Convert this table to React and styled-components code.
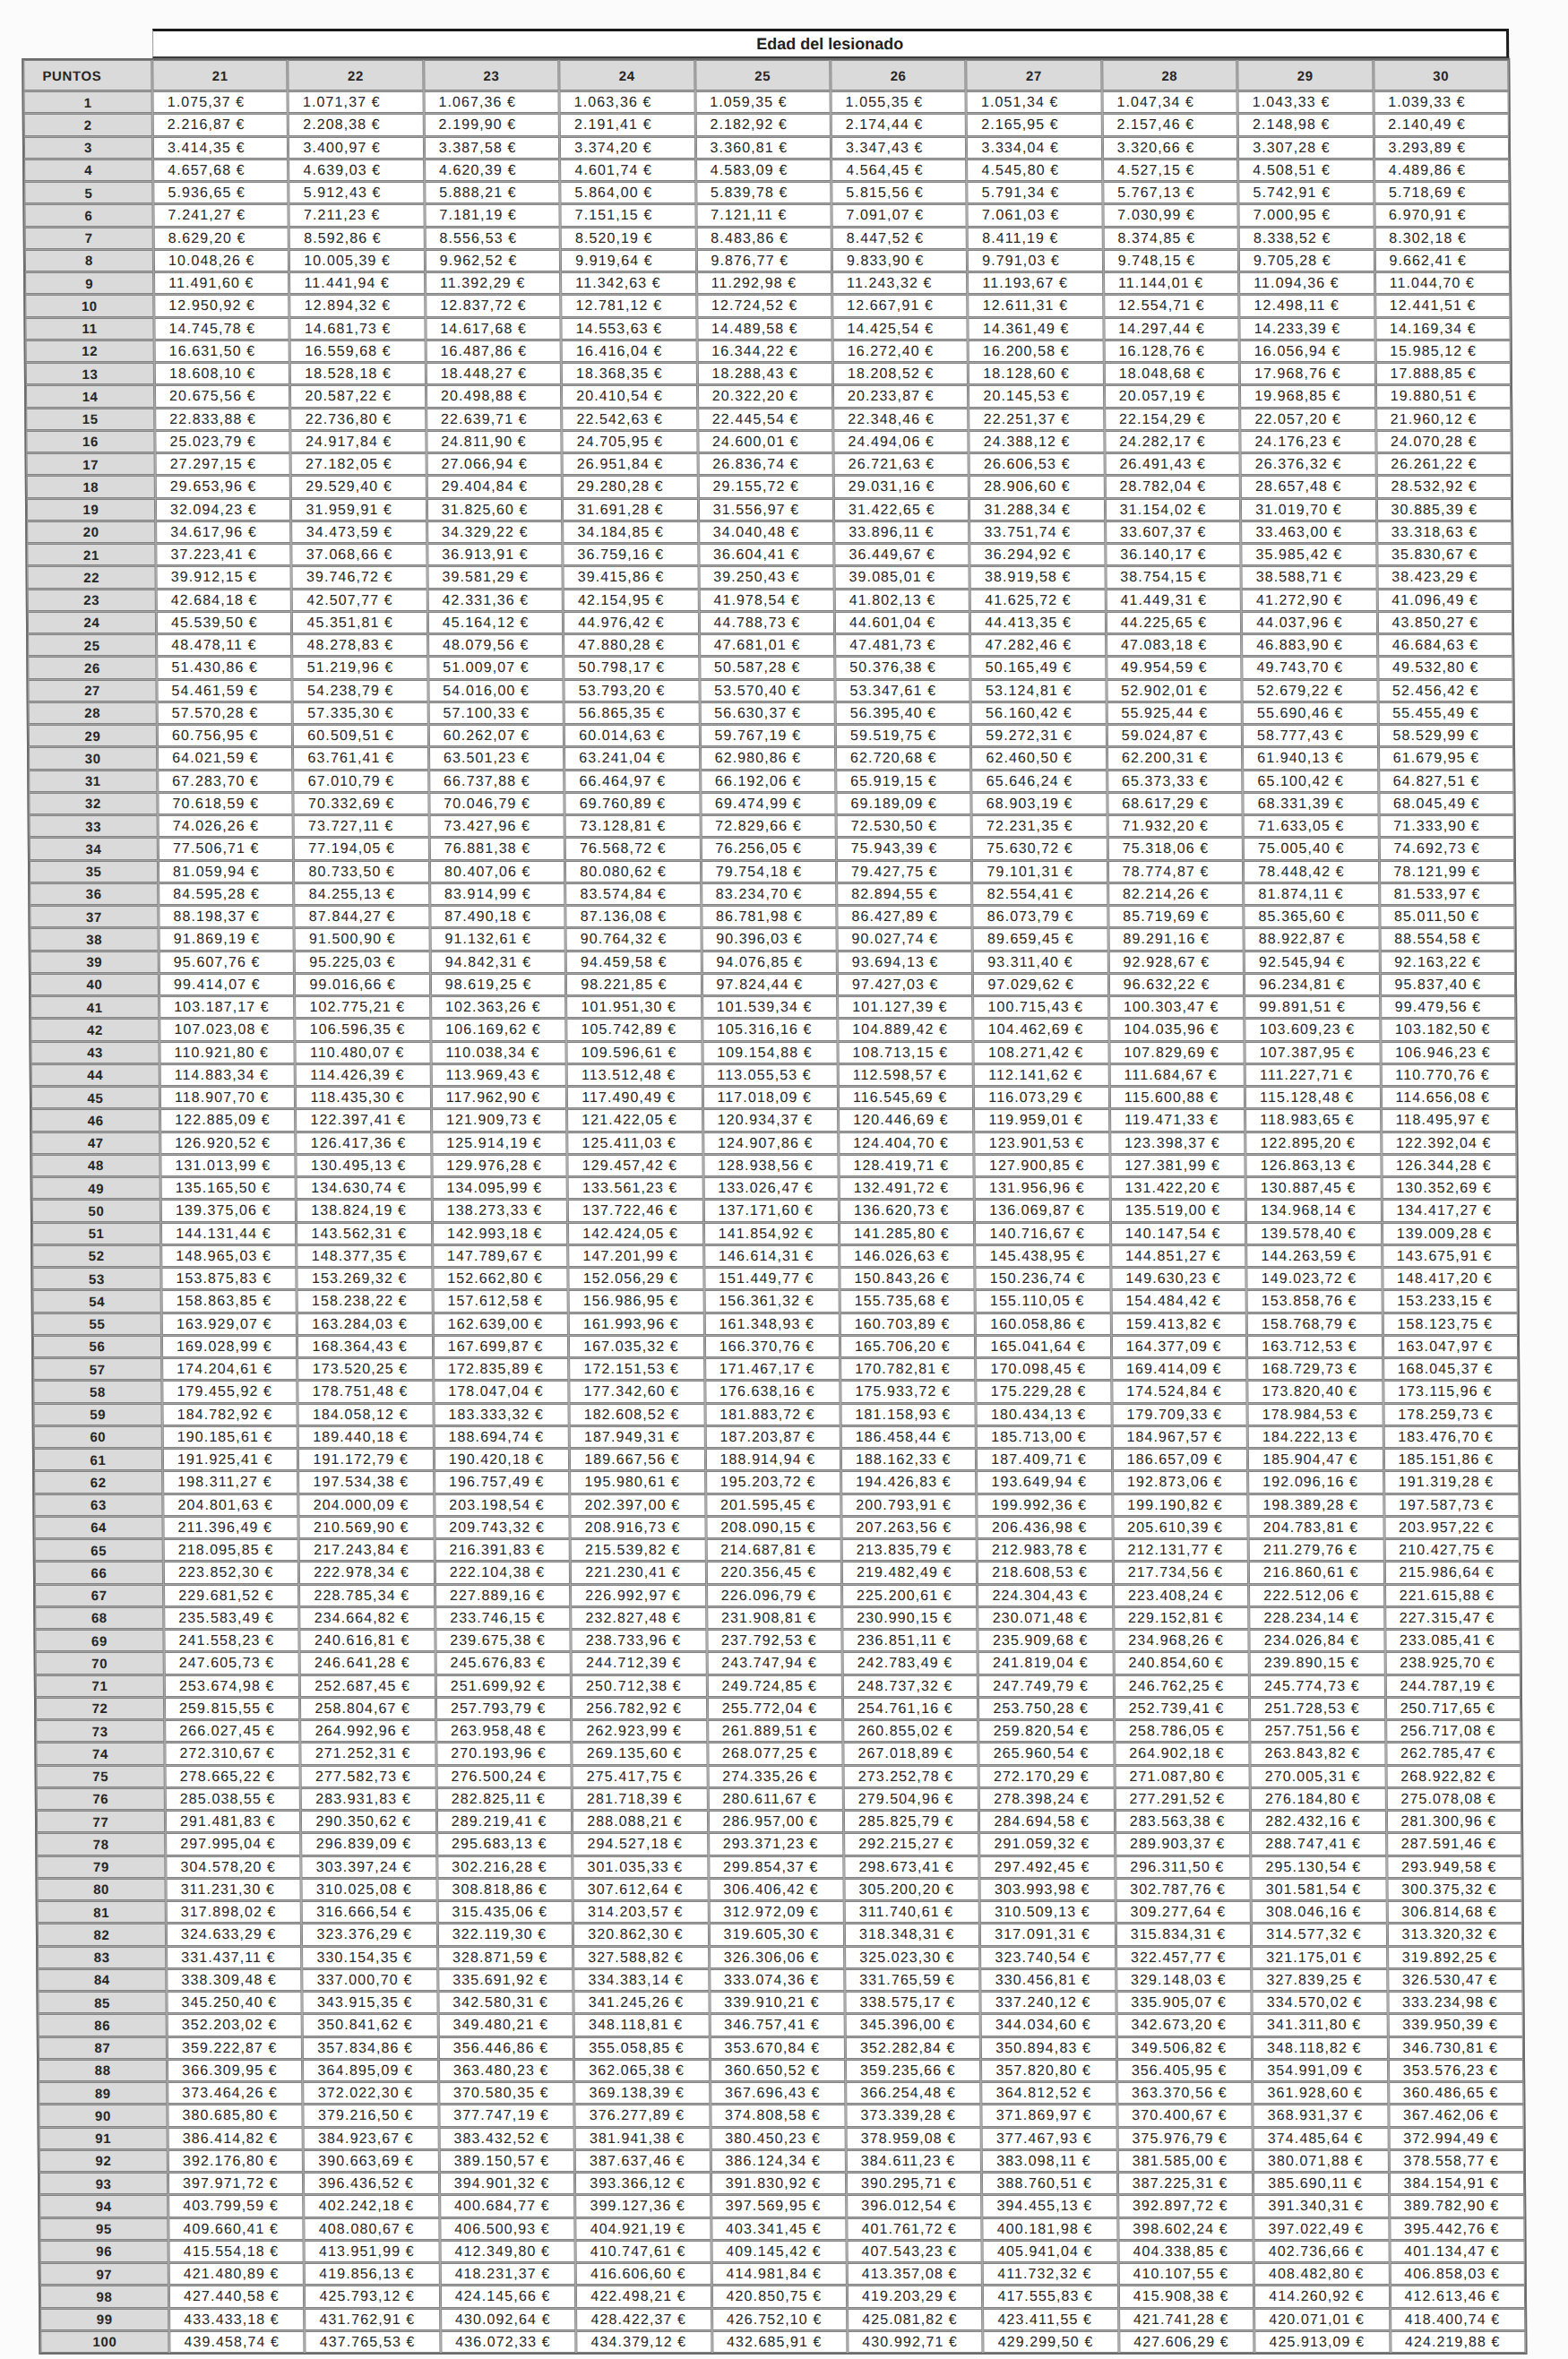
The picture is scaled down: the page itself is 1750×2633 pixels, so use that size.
import styled, { createGlobalStyle } from "styled-components";

const GlobalStyle = createGlobalStyle`
  body {
    margin: 0;
    background: #fbfbfb;
    font-family: "Liberation Sans", Arial, sans-serif;
  }
`;

const AGES = [21, 22, 23, 24, 25, 26, 27, 28, 29, 30];

// [edad 21, edad 29, edad 30] — the ages in between are linear
const ROWS = [
  [1075.37, 1043.33, 1039.33],
  [2216.87, 2148.98, 2140.49],
  [3414.35, 3307.28, 3293.89],
  [4657.68, 4508.51, 4489.86],
  [5936.65, 5742.91, 5718.69],
  [7241.27, 7000.95, 6970.91],
  [8629.2, 8338.52, 8302.18],
  [10048.26, 9705.28, 9662.41],
  [11491.6, 11094.36, 11044.7],
  [12950.92, 12498.11, 12441.51],
  [14745.78, 14233.39, 14169.34],
  [16631.5, 16056.94, 15985.12],
  [18608.1, 17968.76, 17888.85],
  [20675.56, 19968.85, 19880.51],
  [22833.88, 22057.2, 21960.12],
  [25023.79, 24176.23, 24070.28],
  [27297.15, 26376.32, 26261.22],
  [29653.96, 28657.48, 28532.92],
  [32094.23, 31019.7, 30885.39],
  [34617.96, 33463.0, 33318.63],
  [37223.41, 35985.42, 35830.67],
  [39912.15, 38588.71, 38423.29],
  [42684.18, 41272.9, 41096.49],
  [45539.5, 44037.96, 43850.27],
  [48478.11, 46883.9, 46684.63],
  [51430.86, 49743.7, 49532.8],
  [54461.59, 52679.22, 52456.42],
  [57570.28, 55690.46, 55455.49],
  [60756.95, 58777.43, 58529.99],
  [64021.59, 61940.13, 61679.95],
  [67283.7, 65100.42, 64827.51],
  [70618.59, 68331.39, 68045.49],
  [74026.26, 71633.05, 71333.9],
  [77506.71, 75005.4, 74692.73],
  [81059.94, 78448.42, 78121.99],
  [84595.28, 81874.11, 81533.97],
  [88198.37, 85365.6, 85011.5],
  [91869.19, 88922.87, 88554.58],
  [95607.76, 92545.94, 92163.22],
  [99414.07, 96234.81, 95837.4],
  [103187.17, 99891.51, 99479.56],
  [107023.08, 103609.23, 103182.5],
  [110921.8, 107387.95, 106946.23],
  [114883.34, 111227.71, 110770.76],
  [118907.7, 115128.48, 114656.08],
  [122885.09, 118983.65, 118495.97],
  [126920.52, 122895.2, 122392.04],
  [131013.99, 126863.13, 126344.28],
  [135165.5, 130887.45, 130352.69],
  [139375.06, 134968.14, 134417.27],
  [144131.44, 139578.4, 139009.28],
  [148965.03, 144263.59, 143675.91],
  [153875.83, 149023.72, 148417.2],
  [158863.85, 153858.76, 153233.15],
  [163929.07, 158768.79, 158123.75],
  [169028.99, 163712.53, 163047.97],
  [174204.61, 168729.73, 168045.37],
  [179455.92, 173820.4, 173115.96],
  [184782.92, 178984.53, 178259.73],
  [190185.61, 184222.13, 183476.7],
  [191925.41, 185904.47, 185151.86],
  [198311.27, 192096.16, 191319.28],
  [204801.63, 198389.28, 197587.73],
  [211396.49, 204783.81, 203957.22],
  [218095.85, 211279.76, 210427.75],
  [223852.3, 216860.61, 215986.64],
  [229681.52, 222512.06, 221615.88],
  [235583.49, 228234.14, 227315.47],
  [241558.23, 234026.84, 233085.41],
  [247605.73, 239890.15, 238925.7],
  [253674.98, 245774.73, 244787.19],
  [259815.55, 251728.53, 250717.65],
  [266027.45, 257751.56, 256717.08],
  [272310.67, 263843.82, 262785.47],
  [278665.22, 270005.31, 268922.82],
  [285038.55, 276184.8, 275078.08],
  [291481.83, 282432.16, 281300.96],
  [297995.04, 288747.41, 287591.46],
  [304578.2, 295130.54, 293949.58],
  [311231.3, 301581.54, 300375.32],
  [317898.02, 308046.16, 306814.68],
  [324633.29, 314577.32, 313320.32],
  [331437.11, 321175.01, 319892.25],
  [338309.48, 327839.25, 326530.47],
  [345250.4, 334570.02, 333234.98],
  [352203.02, 341311.8, 339950.39],
  [359222.87, 348118.82, 346730.81],
  [366309.95, 354991.09, 353576.23],
  [373464.26, 361928.6, 360486.65],
  [380685.8, 368931.37, 367462.06],
  [386414.82, 374485.64, 372994.49],
  [392176.8, 380071.88, 378558.77],
  [397971.72, 385690.11, 384154.91],
  [403799.59, 391340.31, 389782.9],
  [409660.41, 397022.49, 395442.76],
  [415554.18, 402736.66, 401134.47],
  [421480.89, 408482.8, 406858.03],
  [427440.58, 414260.92, 412613.46],
  [433433.18, 420071.01, 418400.74],
  [439458.74, 425913.09, 424219.88],
];

function euros(v) {
  const [int, dec] = v.toFixed(2).split(".");
  return int.replace(/\B(?=(\d{3})+(?!\d))/g, ".") + "," + dec + " €";
}

function rowValues([first, age29, last]) {
  return AGES.map((_, i) => {
    if (i === 8) return age29;
    if (i === 9) return last;
    return first + ((last - first) * i) / 9;
  });
}

const Page = styled.div`
  width: 1750px;
  height: 2633px;
  overflow: hidden;
  padding: 32px 0 0 24px;
  box-sizing: border-box;
`;

const Sheet = styled.div`
  width: fit-content;
  transform: skewX(0.43deg);
  transform-origin: 0 0;
`;

const TitleRow = styled.div`
  display: flex;
  padding-left: 146px;
`;

const TitleBox = styled.div`
  width: 1514px;
  height: 33px;
  box-sizing: border-box;
  border-top: 3px solid #1b1b1b;
  border-right: 3px solid #1b1b1b;
  border-bottom: 2px solid #3a3a3a;
  border-left: 1px solid #9a9a9a;
  background: #fff;
  display: flex;
  align-items: center;
  justify-content: center;
  font-size: 18px;
  font-weight: bold;
  color: #1e1e1e;
`;

const Grid = styled.div`
  display: grid;
  grid-template-columns: 143px repeat(10, 150.4px);
  grid-template-rows: 34px;
  grid-auto-rows: 24.25px;
  gap: 1px;
  width: fit-content;
  background: #a4a4a4;
  border: 2px solid #6c6c6c;
`;

const Cell = styled.div`
  box-sizing: border-box;
  border: 1px solid #838383;
  display: flex;
  align-items: center;
  justify-content: ${(p) => (p.$align === "left" ? "flex-start" : "center")};
  padding-left: ${(p) => (p.$align === "left" ? p.$pad || 15 : 0)}px;
  background: ${(p) => (p.$head ? "#dadada" : "#fff")};
  font-size: ${(p) => (p.$head ? 15 : 16)}px;
  font-weight: ${(p) => (p.$head ? "bold" : "normal")};
  letter-spacing: ${(p) => (p.$head ? 0.6 : 1.1)}px;
  color: #262626;
  white-space: nowrap;
`;

export default function App() {
  return (
    <Page>
      <GlobalStyle />
      <Sheet>
        <TitleRow>
          <TitleBox>Edad del lesionado</TitleBox>
        </TitleRow>
        <Grid>
          <Cell $head $align="left" $pad={20}>
            PUNTOS
          </Cell>
          {AGES.map((age) => (
            <Cell $head key={age}>
              {age}
            </Cell>
          ))}
          {ROWS.map((row, idx) => [
            <Cell $head key={"p" + idx}>
              {idx + 1}
            </Cell>,
            ...rowValues(row).map((v, i) => (
              <Cell $align="left" key={idx + "-" + i}>
                {euros(v)}
              </Cell>
            )),
          ])}
        </Grid>
      </Sheet>
    </Page>
  );
}
